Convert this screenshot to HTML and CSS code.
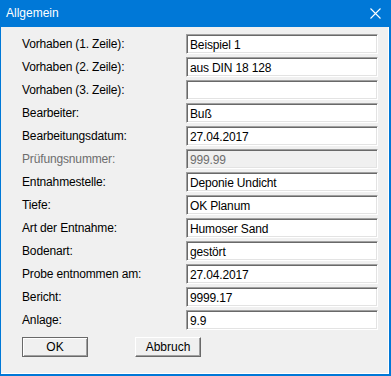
FILE: index.html
```html
<!DOCTYPE html>
<html lang="de">
<head>
  <meta charset="UTF-8">
  <title>Allgemein</title>
  <link rel="stylesheet" href="styles.css">
</head>
<body>

  <div class="window">
    <div class="titlebar">
      <span class="title">Allgemein</span>
      <svg class="close" width="11" height="11" viewBox="0 0 11 11">
        <path d="M0.5 0.5 L10.5 10.5 M10.5 0.5 L0.5 10.5" stroke="#fff" stroke-width="1.1" fill="none"/>
      </svg>
    </div>

    <div class="content">
      <div class="form">
        <label>Vorhaben (1. Zeile):</label><div class="field">Beispiel 1</div>
        <label>Vorhaben (2. Zeile):</label><div class="field">aus DIN 18 128</div>
        <label>Vorhaben (3. Zeile):</label><div class="field"></div>
        <label>Bearbeiter:</label><div class="field">Buß</div>
        <label>Bearbeitungsdatum:</label><div class="field">27.04.2017</div>
        <label class="disabled">Prüfungsnummer:</label><div class="field disabled">999.99</div>
        <label>Entnahmestelle:</label><div class="field">Deponie Undicht</div>
        <label>Tiefe:</label><div class="field">OK Planum</div>
        <label>Art der Entnahme:</label><div class="field">Humoser Sand</div>
        <label>Bodenart:</label><div class="field">gestört</div>
        <label>Probe entnommen am:</label><div class="field">27.04.2017</div>
        <label>Bericht:</label><div class="field">9999.17</div>
        <label>Anlage:</label><div class="field">9.9</div>
      </div>

      <div class="buttons">
        <div class="button default">OK</div>
        <div class="button">Abbruch</div>
      </div>
    </div>
  </div>

</body>
</html>
```

FILE: styles.css
```css
* {
  margin: 0;
  padding: 0;
  box-sizing: border-box;
}

body {
  background: #fff;
  font-family: 'Liberation Sans', Arial, sans-serif;
}

.window {
  width: 391px;
  height: 376px;
  display: flex;
  flex-direction: column;
  background: #0078d7;
  padding: 0 1px 2px 1px;
}

.titlebar {
  height: 27px;
  display: flex;
  align-items: center;
  justify-content: space-between;
  padding: 0 9px 1px 5px;
}

.title {
  color: #fff;
  font-size: 12px;
}

.content {
  flex: 1;
  background: #f0f0f0;
  border-right: 1px solid #fff;
  border-bottom: 1px solid #fff;
  padding: 7px 0 0 21px;
  margin-right: 1px;
}

.form {
  display: grid;
  grid-template-columns: 164px 192px;
  grid-auto-rows: 20px;
  row-gap: 3px;
}

.form label {
  display: flex;
  align-items: center;
  font-size: 12px;
  letter-spacing: -0.15px;
  color: #000;
  padding-bottom: 1px;
}

.form label.disabled {
  color: #6d6d6d;
}

.field {
  background: #fff;
  border: 1px solid;
  border-color: #a0a0a0 #fff #fff #a0a0a0;
  box-shadow: inset 1px 1px 0 #696969, inset -1px -1px 0 #e3e3e3;
  font-size: 12px;
  letter-spacing: -0.15px;
  padding: 3px 0 0 3px;
  color: #000;
  white-space: nowrap;
  overflow: hidden;
}

.field.disabled {
  background: #f0f0f0;
  color: #6d6d6d;
}

.buttons {
  display: flex;
  gap: 47px;
  margin-top: 7px;
}

.button {
  width: 66px;
  height: 20px;
  display: flex;
  align-items: center;
  justify-content: center;
  font-size: 12px;
  background: #f0f0f0;
  border: 1px solid;
  border-color: #fff #696969 #696969 #fff;
  box-shadow: inset -1px -1px 0 #a0a0a0;
  padding-bottom: 1px;
}

.button.default {
  border-color: #696969;
  box-shadow: inset 1px 1px 0 #fff, inset -1px -1px 0 #a0a0a0;
}
```
